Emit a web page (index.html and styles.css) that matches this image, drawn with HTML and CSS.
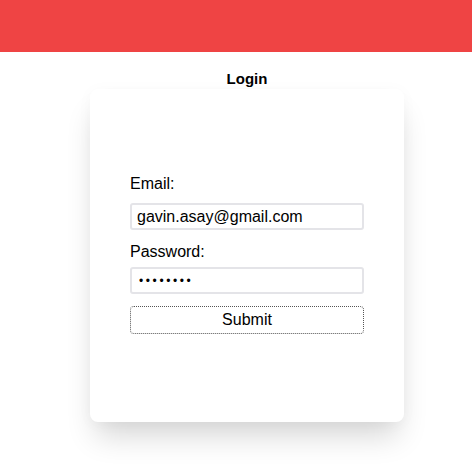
FILE: index.html
```html
<!DOCTYPE html>
<html>
<head>
<meta charset="utf-8">
<link rel="stylesheet" href="styles.css">
</head>
<body>
<header class="topbar"></header>
<main class="page">
  <h1 class="title">Login</h1>
  <div class="card">
    <form class="form">
      <label class="label label-email" for="email">Email:</label>
      <input class="input input-email" id="email" type="text" value="gavin.asay@gmail.com">
      <label class="label label-pw" for="pw">Password:</label>
      <input class="input input-pw" id="pw" type="password" value="password">
      <button class="submit" type="button">Submit</button>
    </form>
  </div>
</main>
</body>
</html>
```
FILE: styles.css
```css
html, body {
  margin: 0;
  padding: 0;
  background: #fff;
  font-family: "Liberation Sans", Arial, sans-serif;
  color: #000;
}
.topbar {
  height: 52px;
  background: #ef4444;
}
.page {
  display: flex;
  flex-direction: column;
  align-items: center;
  padding-left: 22px;
  padding-bottom: 60px;
}
.title {
  font-size: 15px;
  font-weight: bold;
  margin: 18px 0 0 0;
  line-height: 18px;
}
.card {
  margin-top: 1px;
  width: 314px;
  height: 333px;
  box-sizing: border-box;
  background: #fff;
  border-radius: 8px;
  box-shadow: 0 20px 30px -6px rgba(0,0,0,0.16), 0 2px 16px rgba(0,0,0,0.03);
  padding: 86px 40px 0 40px;
}
.form {
  display: flex;
  flex-direction: column;
}
.label {
  font-size: 16px;
  line-height: 18px;
}
.label-pw {
  margin-top: 13px;
}
.input {
  margin-top: 10px;
  height: 27px;
  box-sizing: border-box;
  border: 2px solid #e4e4e8;
  border-radius: 3px;
  padding: 0 5px;
  font-family: "Liberation Sans", Arial, sans-serif;
  font-size: 16px;
  color: #000;
  outline: none;
}
.input-pw {
  margin-top: 6px;
  padding-left: 7px;
  font-size: 12px;
  letter-spacing: 2.6px;
}
.submit {
  margin-top: 12px;
  height: 28px;
  box-sizing: border-box;
  border: 1px dotted #555;
  border-radius: 4px;
  background: #fff;
  font-family: "Liberation Sans", Arial, sans-serif;
  font-size: 16px;
  color: #000;
  padding: 0;
}
```
